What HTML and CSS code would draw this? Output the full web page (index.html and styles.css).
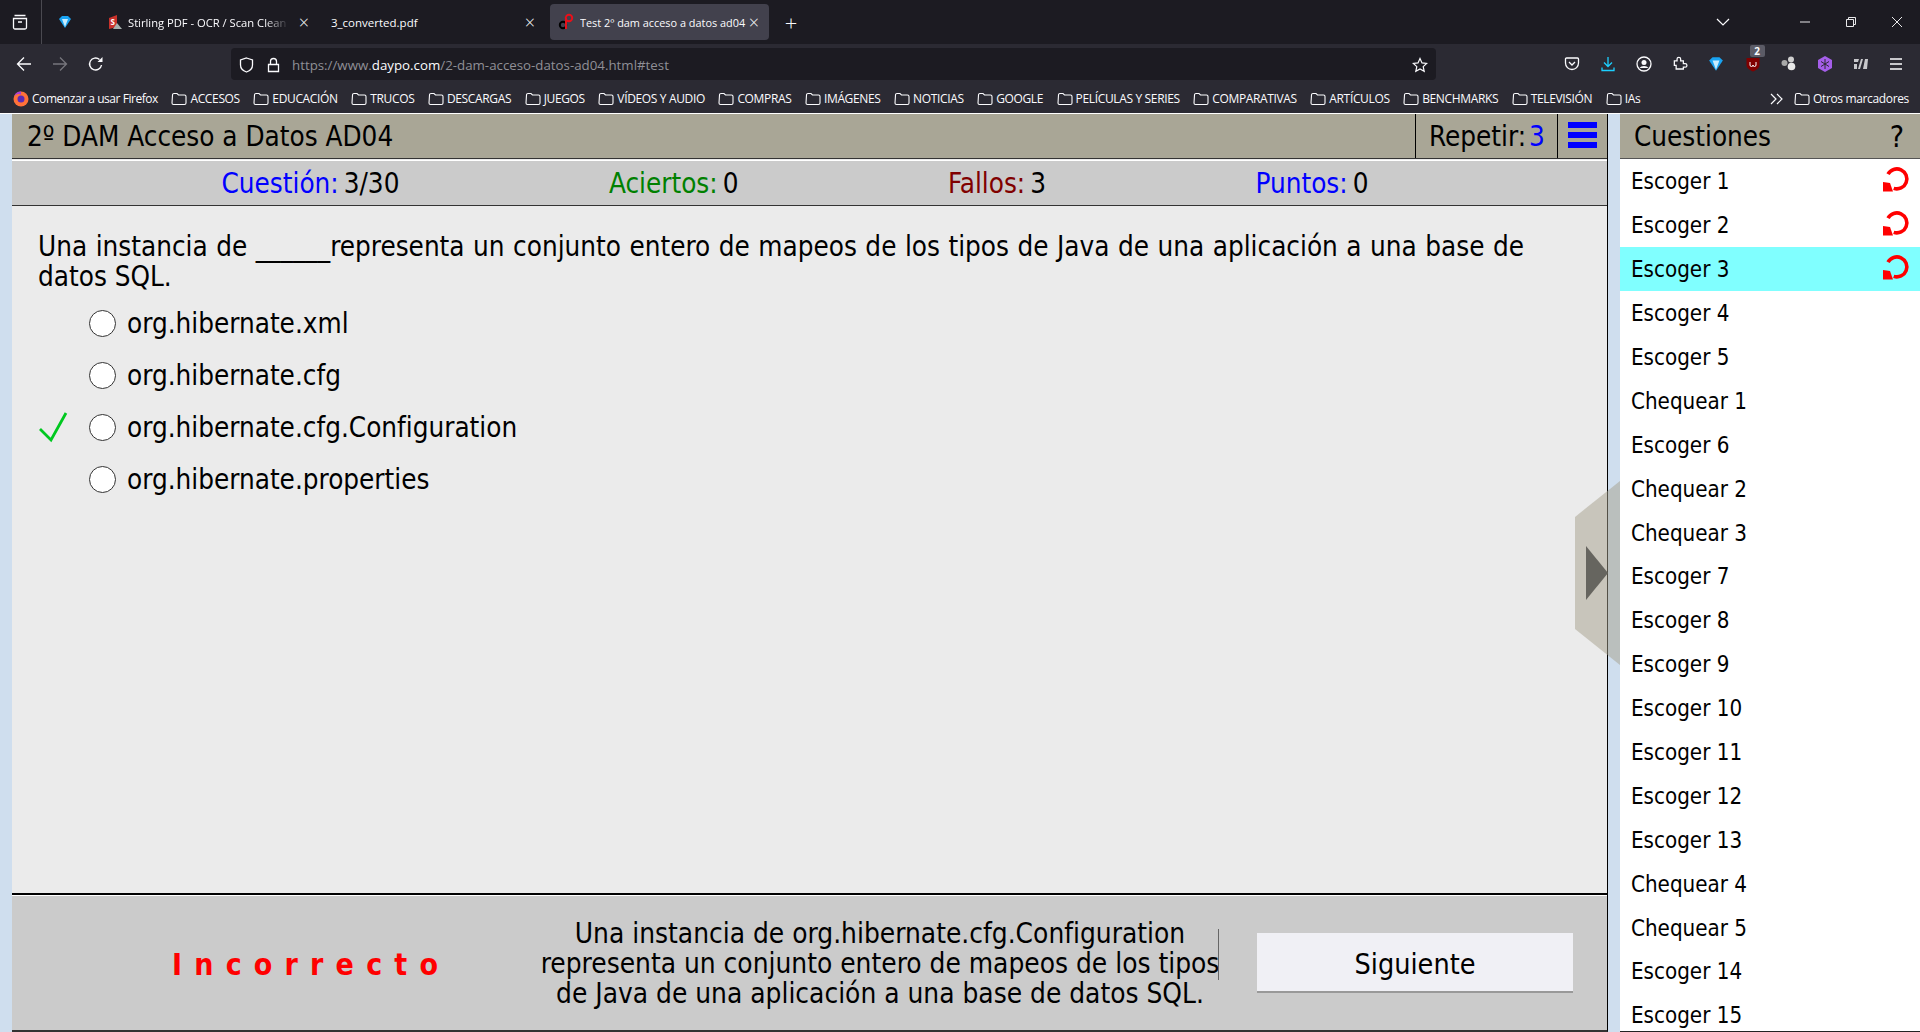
FILE: index.html
```html
<!DOCTYPE html>
<html lang="es">
<head>
    <meta charset="UTF-8">
    <title>Test 2º dam acceso a datos ad04</title>
    <link rel="stylesheet" href="styles.css">
</head>
<body>

<svg class="defs" width="0" height="0">
    <symbol id="folder" viewBox="0 0 16 16">
        <path d="M1.5 4a1.500 1.500 0 0 1 1.500-1.500h3l1.500 1.500h6a1.500 1.500 0 0 1 1.500 1.500v6.500a1.500 1.500 0 0 1-1.500 1.500h-11a1.500 1.500 0 0 1-1.500-1.500z" fill="none" stroke="currentColor" stroke-width="1.100"/>
    </symbol>
    <symbol id="retry" viewBox="0 0 28 28">
        <path d="M5 9.200A10 10 0 1 1 10.700 23.400" fill="none" stroke="#ff0000" stroke-width="3.600"/>
        <path d="M0 17l7 1 3 8.500H0z" fill="#ff0000"/>
    </symbol>
</svg>

<header class="browser">
    <div class="tabbar">
        <div class="tab-views">
            <svg width="16" height="16" viewBox="0 0 16 16"><path d="M2.500 1.500h11M1.500 4.500h13v9a1.500 1.500 0 0 1-1.500 1.500h-10a1.500 1.500 0 0 1-1.500-1.500zM6 8h4" fill="none" stroke="#fbfbfe" stroke-width="1.300"/></svg>
        </div>
        <div class="tab tab-pinned">
            <svg width="14" height="14" viewBox="0 0 14 14"><path d="M1 4l3-3h6l3 3-6 9z" fill="#19a3f2"/><path d="M4 4h6l-3 8z" fill="#c7edff"/></svg>
        </div>
        <div class="tab tab-first">
            <svg width="14" height="15" viewBox="0 0 14 15"><path d="M1 3l8-3v12l-8 2z" fill="#c8322b"/><path d="M9 8l5 6H5z" fill="#a6b0ad"/><text x="2.500" y="10" font-size="8" font-weight="700" fill="#ffffff">S</text></svg>
            <span class="tab-title tab-fade">Stirling PDF - OCR / Scan Clean</span>
            <span class="tab-close">×</span>
        </div>
        <div class="tab tab-second">
            <span class="tab-title">3_converted.pdf</span>
            <span class="tab-close">×</span>
        </div>
        <div class="tab tab-active">
            <svg width="16" height="18" viewBox="0 0 16 18"><circle cx="5" cy="12" r="3.200" fill="none" stroke="#000000" stroke-width="2"/><path d="M8 15V3" stroke="#000000" stroke-width="2"/><circle cx="11" cy="5" r="3.200" fill="none" stroke="#e8101a" stroke-width="2"/><path d="M8 16V5" stroke="#e8101a" stroke-width="2"/></svg>
            <span class="tab-title">Test 2º dam acceso a datos ad04</span>
            <span class="tab-close">×</span>
        </div>
        <div class="tab-new">+</div>
        <div class="tabbar-right">
            <svg class="tab-list" width="14" height="8" viewBox="0 0 14 8"><path d="M1 1l6 6 6-6" fill="none" stroke="#fbfbfe" stroke-width="1.200"/></svg>
            <div class="win-button"><svg width="10" height="10" viewBox="0 0 10 10"><path d="M0 5h10" stroke="#e8e8ea"/></svg></div>
            <div class="win-button"><svg width="10" height="10" viewBox="0 0 10 10"><path d="M.5 2.500h7v7h-7zM2.500 2.500v-2h7v7h-2" fill="none" stroke="#e8e8ea"/></svg></div>
            <div class="win-button"><svg width="10" height="10" viewBox="0 0 10 10"><path d="M0 0l10 10M10 0L0 10" stroke="#e8e8ea"/></svg></div>
        </div>
    </div>

    <div class="toolbar">
        <div class="nav-buttons">
            <svg width="16" height="16" viewBox="0 0 16 16"><path d="M15 8H1.500M8 1.500L1.500 8 8 14.500" fill="none" stroke="#fbfbfe" stroke-width="1.300"/></svg>
            <svg width="16" height="16" viewBox="0 0 16 16"><path d="M1 8h13.500M8 1.500L14.500 8 8 14.500" fill="none" stroke="#77767d" stroke-width="1.300"/></svg>
            <svg width="16" height="16" viewBox="0 0 16 16"><path d="M13.500 9a6 6 0 1 1-2-5.500" fill="none" stroke="#fbfbfe" stroke-width="1.400"/><path d="M14.500 1v5h-5z" fill="#fbfbfe"/></svg>
        </div>
        <div class="urlbar">
            <svg width="15" height="16" viewBox="0 0 15 16"><path d="M7.500 1l6 2v5c0 3.500-3 6-6 7-3-1-6-3.500-6-7V3z" fill="none" stroke="#fbfbfe" stroke-width="1.300"/></svg>
            <svg class="url-lock" width="13" height="16" viewBox="0 0 13 16"><path d="M1.500 7.500h10v7h-10zM3.500 7.500V4.500a3 3 0 0 1 6 0v3" fill="none" stroke="#fbfbfe" stroke-width="1.300"/></svg>
            <span class="url-text">https://www.<b>daypo.com</b>/2-dam-acceso-datos-ad04.html#test</span>
            <svg width="16" height="16" viewBox="0 0 16 16"><path d="M8 1.500l2 4.400 4.700.5-3.500 3.200 1 4.700L8 11.900l-4.200 2.400 1-4.700L1.300 6.400 6 5.900z" fill="none" stroke="#fbfbfe" stroke-width="1.200"/></svg>
        </div>
        <div class="extensions">
            <svg width="16" height="16" viewBox="0 0 16 16"><path d="M2.500 2h11a1 1 0 0 1 1 1v4a6.500 6.500 0 0 1-13 0V3a1 1 0 0 1 1-1zM5 6l3 3 3-3" fill="none" stroke="#fbfbfe" stroke-width="1.300"/></svg>
            <svg width="16" height="16" viewBox="0 0 16 16"><path d="M8 1v9M4 6.500L8 10.500l4-4M2 11.500v3h12v-3" fill="none" stroke="#1ccfff" stroke-width="1.300"/></svg>
            <svg width="16" height="16" viewBox="0 0 16 16"><circle cx="8" cy="8" r="7" fill="none" stroke="#fbfbfe" stroke-width="1.300"/><circle cx="8" cy="6.500" r="2.500" fill="#fbfbfe"/><path d="M3.500 12a5 3.500 0 0 1 9 0z" fill="#fbfbfe"/></svg>
            <svg width="16" height="16" viewBox="0 0 16 16"><path d="M1.500 6h3V4a2 2 0 0 1 4 0v2h3v3h2a2 2 0 0 1 0 4h-2v2h-8v-4h-2z" transform="translate(1 -.5) scale(.9)" fill="none" stroke="#fbfbfe" stroke-width="1.400"/></svg>
            <svg width="16" height="16" viewBox="0 0 14 14"><path d="M1 4l3-3h6l3 3-6 9z" fill="#19a3f2"/><path d="M4 4h6l-3 8z" fill="#c7edff"/></svg>
            <div class="ublock">
                <svg width="16" height="16" viewBox="0 0 16 16"><path d="M1.500 2h13v7c0 3-3 5-6.500 6.500C4.500 14 1.500 12 1.500 9z" fill="#800000"/><path d="M5 6v3a1.500 1.500 0 0 0 3 0 1.500 1.500 0 0 0 3 0V6" fill="none" stroke="#ffffff"/></svg>
                <span class="badge">2</span>
            </div>
            <svg width="16" height="16" viewBox="0 0 16 16"><circle cx="3.500" cy="7" r="3" fill="#a8a8a8"/><circle cx="10" cy="3.500" r="3" fill="#cfcfcf"/><circle cx="10.500" cy="10.500" r="3.800" fill="#e8e8e8"/></svg>
            <svg width="16" height="16" viewBox="0 0 16 16"><path d="M8 0l7 4v8l-7 4-7-4V4z" fill="#a55eea"/><path d="M8 3v10M4 5.500l8 5M12 5.500l-8 5" stroke="#2b2a33"/></svg>
            <svg width="16" height="16" viewBox="0 0 16 16"><path d="M1 3h5l-1 3H1zM1 8h3v5H1zM8 3h2l-3 10H5zM12 3h3l-1 10h-4z" fill="#c8c8cc"/></svg>
            <svg width="14" height="12" viewBox="0 0 14 12"><path d="M1 1h12M1 6h12M1 11h12" stroke="#fbfbfe" stroke-width="1.300"/></svg>
        </div>
    </div>

    <div class="bookmarks">
        <div class="bookmark bookmark-first">
            <svg class="firefox" width="16" height="16" viewBox="0 0 16 16"><circle cx="8" cy="8" r="7.500" fill="#ff7139"/><path d="M8 .5a7.500 7.500 0 0 0-7 5c2-3 5-3 7-2z" fill="#a83fd6"/><circle cx="8" cy="8" r="3.500" fill="#5b2bb5"/></svg>
            Comenzar a usar Firefox
        </div>
        <div class="bookmark"><svg width="16" height="16"><use href="#folder"/></svg>ACCESOS</div>
        <div class="bookmark"><svg width="16" height="16"><use href="#folder"/></svg>EDUCACIÓN</div>
        <div class="bookmark"><svg width="16" height="16"><use href="#folder"/></svg>TRUCOS</div>
        <div class="bookmark"><svg width="16" height="16"><use href="#folder"/></svg>DESCARGAS</div>
        <div class="bookmark"><svg width="16" height="16"><use href="#folder"/></svg>JUEGOS</div>
        <div class="bookmark"><svg width="16" height="16"><use href="#folder"/></svg>VÍDEOS Y AUDIO</div>
        <div class="bookmark"><svg width="16" height="16"><use href="#folder"/></svg>COMPRAS</div>
        <div class="bookmark"><svg width="16" height="16"><use href="#folder"/></svg>IMÁGENES</div>
        <div class="bookmark"><svg width="16" height="16"><use href="#folder"/></svg>NOTICIAS</div>
        <div class="bookmark"><svg width="16" height="16"><use href="#folder"/></svg>GOOGLE</div>
        <div class="bookmark"><svg width="16" height="16"><use href="#folder"/></svg>PELÍCULAS Y SERIES</div>
        <div class="bookmark"><svg width="16" height="16"><use href="#folder"/></svg>COMPARATIVAS</div>
        <div class="bookmark"><svg width="16" height="16"><use href="#folder"/></svg>ARTÍCULOS</div>
        <div class="bookmark"><svg width="16" height="16"><use href="#folder"/></svg>BENCHMARKS</div>
        <div class="bookmark"><svg width="16" height="16"><use href="#folder"/></svg>TELEVISIÓN</div>
        <div class="bookmark"><svg width="16" height="16"><use href="#folder"/></svg>IAs</div>
        <div class="bookmarks-right">
            <svg width="14" height="12" viewBox="0 0 14 12"><path d="M1 1l5 5-5 5M7 1l5 5-5 5" fill="none" stroke="#fbfbfe" stroke-width="1.200"/></svg>
            <div class="bookmark"><svg width="16" height="16"><use href="#folder"/></svg>Otros marcadores</div>
        </div>
    </div>
</header>

<div class="page">
    <main class="test">
        <div class="test-head">
            <h1 class="test-title">2º DAM Acceso a Datos AD04</h1>
            <div class="repeat">Repetir:<span class="blue">3</span></div>
            <div class="menu-button"><span></span><span></span><span></span></div>
        </div>

        <div class="stats">
            <div><span class="blue">Cuestión:</span>3/30</div>
            <div><span class="green">Aciertos:</span>0</div>
            <div><span class="red">Fallos:</span>3</div>
            <div><span class="blue">Puntos:</span>0</div>
        </div>

        <section class="question">
            <p class="question-text">Una instancia de ______representa un conjunto entero de mapeos de los tipos de Java de una aplicación a una base de datos SQL.</p>
            <div class="option"><span class="mark"></span><input type="radio" name="answer"><label>org.hibernate.xml</label></div>
            <div class="option"><span class="mark"></span><input type="radio" name="answer"><label>org.hibernate.cfg</label></div>
            <div class="option">
                <span class="mark"><svg width="30" height="32" viewBox="0 0 30 32"><path d="M1 18l11 11L27 2" fill="none" stroke="#00c820" stroke-width="2.800"/></svg></span>
                <input type="radio" name="answer"><label>org.hibernate.cfg.Configuration</label>
            </div>
            <div class="option"><span class="mark"></span><input type="radio" name="answer"><label>org.hibernate.properties</label></div>
        </section>

        <div class="result">
            <div class="verdict">Incorrecto</div>
            <div class="explanation">Una instancia de org.hibernate.cfg.Configuration representa un conjunto entero de mapeos de los tipos de Java de una aplicación a una base de datos SQL.</div>
            <button class="next">Siguiente</button>
        </div>
    </main>

    <aside class="sidebar">
        <div class="sidebar-head"><span>Cuestiones</span><span class="help">?</span></div>
        <div class="item">Escoger 1<svg width="28" height="28"><use href="#retry"/></svg></div>
        <div class="item">Escoger 2<svg width="28" height="28"><use href="#retry"/></svg></div>
        <div class="item item-current">Escoger 3<svg width="28" height="28"><use href="#retry"/></svg></div>
        <div class="item">Escoger 4</div>
        <div class="item">Escoger 5</div>
        <div class="item">Chequear 1</div>
        <div class="item">Escoger 6</div>
        <div class="item">Chequear 2</div>
        <div class="item">Chequear 3</div>
        <div class="item">Escoger 7</div>
        <div class="item">Escoger 8</div>
        <div class="item">Escoger 9</div>
        <div class="item">Escoger 10</div>
        <div class="item">Escoger 11</div>
        <div class="item">Escoger 12</div>
        <div class="item">Escoger 13</div>
        <div class="item">Chequear 4</div>
        <div class="item">Chequear 5</div>
        <div class="item">Escoger 14</div>
        <div class="item">Escoger 15</div>
    </aside>

    <div class="side-toggle"></div>
    <div class="side-arrow"></div>
</div>

</body>
</html>
```

FILE: styles.css
```css
* {
    box-sizing: border-box;
}
html, body {
    height: 100%;
}
body {
    margin: 0;
    height: 1032px;
    overflow: hidden;
    display: flex;
    flex-direction: column;
    font-family: "DejaVu Sans", sans-serif;
    font-stretch: condensed;
    color: #000;
    background-color: #cfdeee;
}
.defs {
    position: absolute;
}

/* browser chrome */
.browser {
    height: 113px;
    flex: none;
    font-family: "Open Sans", sans-serif;
    font-stretch: normal;
    color: #fbfbfe;
    font-size: 12px;
}
.tabbar {
    height: 44px;
    display: flex;
    align-items: center;
    background-color: #1c1b22;
}
.tab-views {
    width: 42px;
    height: 44px;
    padding-left: 12px;
    display: flex;
    align-items: center;
    border-right: 1px solid #4a4950;
}
.tab {
    height: 36px;
    display: flex;
    align-items: center;
    border-radius: 4px;
}
.tab-pinned {
    width: 58px;
    padding-left: 16px;
}
.tab-first {
    width: 216px;
    padding: 0 3px 0 8px;
    gap: 6px;
}
.tab-first .tab-title {
    font-size: 11.200px;
}
.tab-second {
    width: 234px;
    padding: 0 11px 0 15px;
}
.tab-active {
    width: 219px;
    padding: 0 8px 0 8px;
    background-color: #42414d;
}
.tab-active svg {
    margin-right: 6px;
}
.tab-title {
    flex: 1;
    overflow: hidden;
    white-space: nowrap;
    font-size: 11.500px;
}
.tab-active .tab-title {
    font-size: 10.900px;
}
.tab-fade {
    -webkit-mask-image: linear-gradient(to right, #000 85%, transparent);
    mask-image: linear-gradient(to right, #000 85%, transparent);
}
.tab-close {
    width: 18px;
    font-size: 18px;
    line-height: 18px;
    text-align: center;
    font-weight: 300;
}
.tab-active .tab-close {
    width: 14px;
}
.tab-new {
    width: 44px;
    text-align: center;
    font-size: 22px;
    font-weight: 300;
    line-height: 36px;
}
.tabbar-right {
    margin-left: auto;
    display: flex;
    align-items: center;
}
.tab-list {
    margin-right: 52px;
}
.win-button {
    width: 46px;
    display: flex;
    justify-content: center;
}
.toolbar {
    height: 40px;
    display: flex;
    align-items: center;
    background-color: #2b2a33;
}
.nav-buttons {
    width: 231px;
    padding-left: 16px;
    display: flex;
    gap: 20px;
}
.urlbar {
    width: 1205px;
    height: 32px;
    padding: 1px 8px 0;
    display: flex;
    align-items: center;
    background-color: #1c1b22;
    border-radius: 4px;
}
.url-lock {
    margin-left: 13px;
}
.url-text {
    flex: 1;
    margin-left: 12px;
    font-size: 13.300px;
    color: #8f8f96;
}
.url-text b {
    font-weight: 400;
    color: #fbfbfe;
}
.extensions {
    width: 484px;
    padding: 0 17px 0 128px;
    display: flex;
    align-items: center;
    justify-content: space-between;
}
.ublock {
    position: relative;
    height: 16px;
}
.badge {
    position: absolute;
    top: -11px;
    left: 5px;
    width: 15px;
    height: 12px;
    font-size: 10px;
    line-height: 12px;
    text-align: center;
    font-weight: 700;
    background-color: #5b5b66;
    border-radius: 2px;
}
.bookmarks {
    height: 29px;
    padding-left: 13px;
    display: flex;
    align-items: center;
    gap: 13.500px;
    background-color: #2b2a33;
}
.bookmark {
    display: flex;
    align-items: center;
    gap: 3px;
    font-size: 12px;
    letter-spacing: -0.350px;
    white-space: nowrap;
}
.bookmark-first {
    gap: 3px;
    letter-spacing: -0.450px;
}
.bookmarks-right {
    margin-left: auto;
    padding-right: 11px;
    display: flex;
    align-items: center;
    gap: 10px;
}

/* the test page */
.page {
    flex: 1;
    min-height: 0;
    position: relative;
    padding-left: 12px;
    display: flex;
    gap: 12px;
    border-top: 1px solid #fff;
    overflow: hidden;
}
.test {
    width: 1596px;
    display: flex;
    flex-direction: column;
    background-color: #ebebeb;
    border-right: 1px solid #000;
    font-size: 27.600px;
    border-bottom: 2px solid #333;
}
.blue {
    color: #0000ff;
}
.green {
    color: #008000;
}
.red {
    color: #800000;
}
.test-head {
    height: 45px;
    display: flex;
    align-items: stretch;
    background-color: #a9a696;
    border-bottom: 1px solid #333;
    flex: none;
}
.test-title {
    flex: 1;
    margin: 0;
    padding-left: 15px;
    font-size: 27.600px;
    font-weight: 400;
    line-height: 46px;
}
.repeat {
    width: 142px;
    padding-left: 13px;
    line-height: 46px;
    border-left: 1px solid #000;
}
.repeat span {
    margin-left: 3px;
}
.menu-button {
    width: 50px;
    padding: 8px 10px 10px 10px;
    display: flex;
    flex-direction: column;
    justify-content: space-between;
    border-left: 1px solid #000;
}
.menu-button span {
    height: 6px;
    background-color: #0000ff;
}
.stats {
    height: 46px;
    margin-top: 1px;
    padding-right: 29px;
    display: flex;
    flex: none;
    justify-content: space-evenly;
    align-items: center;
    background-color: #cbcbcb;
    border-top: 1px solid #fff;
    border-bottom: 1px solid #333;
}
.stats span {
    margin-right: 5px;
}
.question {
    flex: 1;
    padding: 26px 83px 0 26px;
}
.question-text {
    margin: 0 0 5px;
    line-height: 30px;
    text-align: justify;
}
.option {
    height: 52px;
    display: flex;
    align-items: center;
}
.mark {
    width: 51px;
    height: 32px;
    padding-left: 1px;
    flex: none;
}
.option input {
    appearance: none;
    width: 27px;
    height: 27px;
    margin: 0;
    flex: none;
    background-color: #fff;
    border: 1.500px solid #333;
    border-radius: 50%;
}
.option label {
    margin-left: 11px;
}
.result {
    height: 137px;
    flex: none;
    display: flex;
    align-items: center;
    background-color: #cbcbcb;
    border-top: 2px solid #000;
    box-shadow: inset 0 1px 0 #fff;
}
.verdict {
    width: 528px;
    padding: 4px 0 0 160px;
    color: #ff0000;
    font-weight: 700;
    font-size: 30px;
    letter-spacing: 12.200px;
    white-space: nowrap;
}
.explanation {
    position: relative;
    width: 680px;
    margin-top: 2px;
    font-size: 27.800px;
    line-height: 30px;
    text-align: center;
}
.explanation::after {
    content: "";
    position: absolute;
    top: 10px;
    right: 1px;
    width: 1px;
    height: 51px;
    background-color: #666;
}
.next {
    width: 316px;
    height: 60px;
    margin-left: 37px;
    padding: 6px 0 0;
    font-family: inherit;
    font-stretch: condensed;
    font-size: 28.500px;
    color: #000;
    background-color: #f0f0f5;
    border: 0;
    border-bottom: 2px solid #999;
}

/* question list */
.sidebar {
    width: 300px;
    background-color: #fff;
    font-size: 22.200px;
    border-bottom: 1px solid #222;
    overflow: hidden;
}
.sidebar-head {
    height: 45px;
    padding: 0 16px 0 14px;
    display: flex;
    justify-content: space-between;
    align-items: center;
    background-color: #a9a696;
    border-bottom: 1px solid #555;
    font-size: 27.600px;
}
.help {
    font-size: 30px;
}
.item {
    height: 43.900px;
    padding: 1px 9px 0 11px;
    display: flex;
    justify-content: space-between;
    align-items: center;
}
.item svg {
    margin-top: -4px;
}
.item-current {
    background-color: #80ffff;
}
.side-toggle {
    position: absolute;
    left: 1575px;
    top: 367px;
    width: 45px;
    height: 184px;
    background-color: rgba(165, 160, 140, 0.5);
    clip-path: polygon(100% 0, 100% 100%, 0 80.500%, 0 19.500%);
}
.side-arrow {
    position: absolute;
    left: 1586px;
    top: 432px;
    width: 22px;
    height: 54px;
    background-color: #66655f;
    clip-path: polygon(0 0, 100% 50%, 0 100%);
}
```
